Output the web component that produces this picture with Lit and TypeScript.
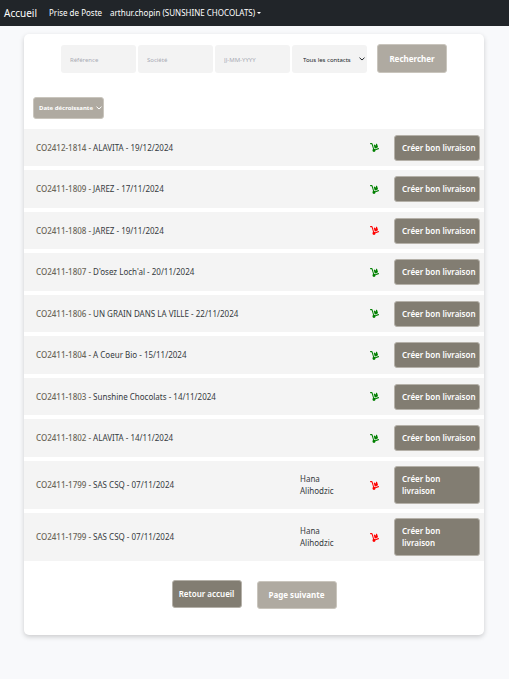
import { LitElement, html, css } from "lit";
import { customElement, property, state } from "lit/decorators.js";

interface Order {
  ref: string;
  company: string;
  date: string;
  contact?: string;
  ready: boolean;
}

const ORDERS: Order[] = [
  { ref: "CO2412-1814", company: "ALAVITA", date: "19/12/2024", ready: true },
  { ref: "CO2411-1809", company: "JAREZ", date: "17/11/2024", ready: true },
  { ref: "CO2411-1808", company: "JAREZ", date: "19/11/2024", ready: false },
  { ref: "CO2411-1807", company: "D'osez Loch'al", date: "20/11/2024", ready: true },
  { ref: "CO2411-1806", company: "UN GRAIN DANS LA VILLE", date: "22/11/2024", ready: true },
  { ref: "CO2411-1804", company: "A Coeur Bio", date: "15/11/2024", ready: true },
  { ref: "CO2411-1803", company: "Sunshine Chocolats", date: "14/11/2024", ready: true },
  { ref: "CO2411-1802", company: "ALAVITA", date: "14/11/2024", ready: true },
  { ref: "CO2411-1799", company: "SAS CSQ", date: "07/11/2024", contact: "Hana Alihodzic", ready: false },
  { ref: "CO2411-1799", company: "SAS CSQ", date: "07/11/2024", contact: "Hana Alihodzic", ready: false },
];

const buttonStyles = css`
  button {
    box-sizing: border-box;
    margin: 0;
    border: 1px solid #b5b1a9;
    border-radius: 3px;
    font: 600 8px/12px "Noto Sans", sans-serif;
    color: #fff;
    background: #827d72;
    cursor: pointer;
  }
  button.light {
    border-color: #c9c5bd;
    background: #afaaa1;
    font-weight: 700;
  }
`;

@customElement("order-row")
export class OrderRow extends LitElement {
  @property({ attribute: false }) order!: Order;

  static styles = [
    buttonStyles,
    css`
      :host {
        display: grid;
        grid-template-columns: minmax(0, 1fr) 40px 24px 86px;
        column-gap: 15px;
        align-items: center;
        padding: 5px 4px 5px 12px;
        background: #f4f4f4;
        color: #343a40;
        font: 8px/12px "Noto Sans", sans-serif;
      }
      .ref {
        color: #6b6659;
        font-weight: 500;
      }
      svg {
        display: block;
        justify-self: end;
        width: 9px;
        height: 9px;
        fill: #f00;
      }
      svg.ready {
        fill: #008000;
      }
      button {
        padding: 6px 0 6px 7px;
        text-align: left;
        white-space: nowrap;
      }
    `,
  ];

  render() {
    const o = this.order;
    return html`
      <div><span class="ref">${o.ref} - </span>${o.company} - ${o.date}</div>
      <div>${o.contact ?? ""}</div>
      <svg class=${o.ready ? "ready" : ""} viewBox="0 0 576 512" preserveAspectRatio="none" aria-hidden="true">
        <path
          d="M0 32C0 14.3 14.3 0 32 0h72.9c27.5 0 52 17.6 60.7 43.8L257.7 320c30.1 .5 56.8 14.9 74 37l202.1-67.4c16.8-5.6 34.9 3.5 40.5 20.2s-3.5 34.9-20.2 40.5L352 417.7c-.9 52.2-43.5 94.3-96 94.3c-53 0-96-43-96-96c0-30.8 14.5-58.2 37-75.8L104.9 64H32C14.3 64 0 49.7 0 32zM244.8 134.5c-5.5-16.8 3.7-34.9 20.5-40.3L311 79.4l19.8 60.9 60.9-19.8L371.8 59.6l45.7-14.8c16.8-5.5 34.9 3.7 40.3 20.5l49.4 152.2c5.5 16.8-3.7 34.9-20.5 40.3L334.5 307.2c-16.8 5.5-34.9-3.7-40.3-20.5L244.8 134.5z"
        />
      </svg>
      <button type="button">
        ${o.contact ? html`Créer bon<br />livraison` : "Créer bon livraison"}
      </button>
    `;
  }
}

@customElement("app-root")
export class AppRoot extends LitElement {
  @state() private orders = ORDERS;

  static styles = [
    buttonStyles,
    css`
      :host {
        display: block;
        min-height: 100vh;
        background: #f8f9fb;
        font: 8px/12px "Noto Sans", sans-serif;
        color: #212529;
      }
      nav {
        display: flex;
        align-items: center;
        height: 26px;
        padding: 0 4px;
        background: #212529;
      }
      nav a {
        display: flex;
        align-items: center;
        gap: 2px;
        margin-right: 8px;
        color: #fff;
        text-decoration: none;
      }
      nav a.brand {
        margin-right: 12px;
        font-size: 10px;
      }
      .caret {
        border: 2px solid transparent;
        border-top-color: #fff;
        border-bottom: 0;
      }
      main {
        margin: 8px 25px 0 24px;
        padding: 10px 0 26px;
        border-radius: 5px;
        background: #fff;
        box-shadow: 0 2px 5px rgba(0, 0, 0, 0.18);
      }
      .search {
        display: flex;
        justify-content: center;
        gap: 2px;
      }
      input,
      select {
        box-sizing: border-box;
        width: 100%;
        height: 28px;
        margin: 0;
        padding: 2px 9px 0;
        border: 0;
        border-radius: 3px;
        background: #f3f3f3;
        font: 6px/12px "Noto Sans", sans-serif;
        color: #212529;
        appearance: none;
      }
      input::placeholder {
        color: #a9abb3;
        opacity: 1;
      }
      .field {
        display: block;
        position: relative;
        width: 75px;
        margin-top: 1px;
      }
      .field select {
        padding-left: 11px;
      }
      .chevron {
        position: absolute;
        right: 2px;
        top: 50%;
        width: 6px;
        height: 4px;
        margin-top: -2px;
        fill: none;
        stroke: #212529;
        pointer-events: none;
      }
      .search button {
        width: 70px;
        height: 29px;
        margin-left: 8px;
      }
      .sort {
        display: block;
        position: relative;
        width: 71px;
        margin: 24px 0 10px 9px;
      }
      .sort select {
        height: 22px;
        padding: 0 5px;
        border: 1px solid #c9c5bd;
        background: #afaaa1;
        color: #fff;
        font-weight: bold;
      }
      .sort .chevron {
        stroke: #fff;
      }
      .orders {
        display: grid;
        gap: 4px;
        margin: 0;
        padding: 0;
        list-style: none;
      }
      .orders order-row {
        min-height: 27px;
      }
      .orders li:nth-child(even) order-row {
        min-height: 28px;
      }
      .orders li:nth-child(n + 9) order-row {
        min-height: 38px;
      }
      .pager {
        display: flex;
        justify-content: center;
        gap: 15px;
        margin: 19px 0 0;
      }
      .pager button {
        width: 70px;
        height: 28px;
        padding: 0;
      }
      .pager button.light {
        width: 80px;
        margin-top: 1px;
      }
    `,
  ];

  private chevron() {
    return html`<svg class="chevron" viewBox="0 0 6 4" aria-hidden="true">
      <path d="M.5 .7 3 3 5.5 .7" />
    </svg>`;
  }

  render() {
    return html`
      <nav>
        <a class="brand" href="#">Accueil</a>
        <a href="#">Prise de Poste</a>
        <a href="#">arthur.chopin (SUNSHINE CHOCOLATS)<span class="caret"></span></a>
      </nav>
      <main>
        <form class="search">
          <label class="field"><input type="text" aria-label="Référence" placeholder="Référence" /></label>
          <label class="field"><input type="text" aria-label="Société" placeholder="Société" /></label>
          <label class="field"><input type="text" aria-label="Date" placeholder="JJ-MM-YYYY" /></label>
          <label class="field">
            <select aria-label="Contact"><option>Tous les contacts</option></select>
            ${this.chevron()}
          </label>
          <button class="light" type="button">Rechercher</button>
        </form>
        <label class="sort">
          <select aria-label="Tri"><option>Date décroissante</option></select>
          ${this.chevron()}
        </label>
        <ul class="orders">
          ${this.orders.map((o) => html`<li><order-row .order=${o}></order-row></li>`)}
        </ul>
        <div class="pager">
          <button type="button">Retour accueil</button>
          <button class="light" type="button">Page suivante</button>
        </div>
      </main>
    `;
  }
}
